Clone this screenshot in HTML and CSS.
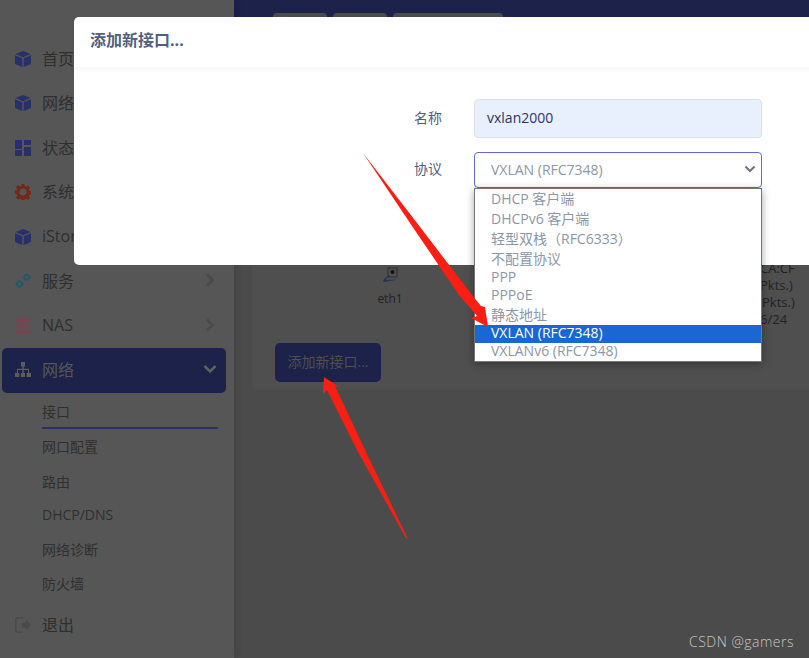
FILE: index.html
```html
<!DOCTYPE html>
<html lang="zh-CN">
<head>
<meta charset="utf-8">
<title>添加新接口</title>
<link rel="stylesheet" href="styles.css">
</head>
<body>
<div class="app">
  <aside class="sidebar">
    <nav class="nav">
      <a class="item"><svg class="ico c-navy" viewBox="0 0 16 16"><use href="#cube"/></svg>首页</a>
      <a class="item"><svg class="ico c-navy" viewBox="0 0 16 16"><use href="#cube"/></svg>网络</a>
      <a class="item"><svg class="ico c-navy" viewBox="0 0 16 16"><path d="M0 0h7v9H0zM0 10h7v6H0zM9 0h7v5H9zM9 7h7v9H9z"/></svg>状态</a>
      <a class="item"><svg class="ico c-rust" viewBox="0 0 16 16"><path fill-rule="evenodd" d="M6.500 0h3l.4 2.200 1.300.6L13 1.500l2.200 2.200-1.300 1.900.5 1.300 1.600.4v3l-1.600.4-.5 1.300 1.300 1.900-2.200 2.200-1.800-1.300-1.300.5-.4 1.800h-3l-.4-1.800-1.300-.5L3 15.500.8 13.300l1.300-1.900-.5-1.300L0 9.700v-3l1.600-.4.5-1.300L.8 3.200 3 1l2 1.300 1.200-.4zM8 4.500a3.500 3.500 0 1 0 0 7 3.500 3.500 0 0 0 0-7z"/></svg>系统</a>
      <a class="item"><svg class="ico c-navy" viewBox="0 0 16 16"><use href="#cube"/></svg>iStore</a>
      <a class="item"><svg class="ico c-teal" viewBox="0 0 16 16"><g fill="none" stroke="currentColor" stroke-width="2.200"><circle cx="4.500" cy="11" r="2.700" stroke-dasharray="1.800 .6"/><circle cx="11.800" cy="4.200" r="2.500" stroke-dasharray="1.600 .6"/></g></svg>服务<svg class="chev" viewBox="0 0 10 14"><path d="M2 1.500 7.500 7 2 12.500"/></svg></a>
      <a class="item"><svg class="ico c-rose" viewBox="0 0 16 16"><path d="M.5 2.200C.5 1 3.800 0 8 0s7.500 1 7.500 2.200S12.200 4.400 8 4.400.5 3.400.5 2.200zM.5 5.200C2.500 6.300 5 6.600 8 6.600s5.500-.3 7.500-1.400v2.600C15.500 9 12.200 10 8 10S.5 9 .5 7.800zM.5 10.800C2.500 11.900 5 12.200 8 12.200s5.500-.3 7.500-1.400v2.800C15.500 15 12.200 16 8 16S.5 15 .5 13.600z"/></svg>NAS<svg class="chev" viewBox="0 0 10 14"><path d="M2 1.500 7.500 7 2 12.500"/></svg></a>
      <a class="item active"><svg class="ico c-grey" viewBox="0 0 16 16"><path d="M6 0h4v4.500H8.700v2.300H14V11h2v4h-4.300v-4H13V8H8.700v3H10v4H6v-4h1.300V8H3v3h1.300v4H0v-4h2V6.800h5.300V4.500H6z"/></svg>网络<svg class="chev down" viewBox="0 0 14 10"><path d="M1.500 2 7 7.500 12.500 2"/></svg></a>
      <div class="sub">
        <a class="sub-item current">接口</a>
        <a class="sub-item">网口配置</a>
        <a class="sub-item">路由</a>
        <a class="sub-item">DHCP/DNS</a>
        <a class="sub-item">网络诊断</a>
        <a class="sub-item">防火墙</a>
      </div>
      <a class="item logout"><svg class="ico c-dim" viewBox="0 0 16 16"><path d="M0 2a2 2 0 0 1 2-2h6v1.500H2a.5.500 0 0 0-.5.500v12a.5.500 0 0 0 .5.500h6V16H2a2 2 0 0 1-2-2z"/><path d="M7 5.500h4V2.800L16 8l-5 5.200v-2.700H7z"/></svg>退出</a>
    </nav>
  </aside>
  <main class="main">
    <header class="topbar">
      <span class="tab tab-s"></span><span class="tab tab-s"></span><span class="tab tab-l"></span>
    </header>
    <section class="card">
      <div class="iface">
        <div class="device">
          <svg class="eth" viewBox="0 0 16 16"><rect x="6" y="1" width="9" height="9" fill="none" stroke="#2e2e2e"/><circle cx="10.500" cy="5" r="2" fill="#14140a"/><path d="M7 8 3 11l-2 3 1 1 12-2-1-.5-9 .5 1-2 3-2z" fill="#27344f"/></svg>
          <span>eth1</span>
        </div>
        <div class="stats">
          <span>CA:CF</span>
          <span>Pkts.)</span>
          <span class="shift">Pkts.)</span>
          <span>6/24</span>
        </div>
      </div>
      <button class="add-btn">添加新接口...</button>
    </section>
  </main>
</div>

<div class="modal">
  <h3 class="modal-title">添加新接口...</h3>
  <div class="modal-body">
    <div class="field">
      <label class="field-label">名称</label>
      <div class="input">vxlan2000</div>
    </div>
    <div class="field field-select">
      <label class="field-label">协议</label>
      <div class="select">VXLAN (RFC7348)<svg class="sel-chev" viewBox="0 0 12 8"><path d="M1.500 1.500 6 6l4.500-4.500"/></svg></div>
    </div>
  </div>
</div>

<ul class="dropdown">
  <li class="opt tall">DHCP 客户端</li>
  <li class="opt tall">DHCPv6 客户端</li>
  <li class="opt tall">轻型双栈（RFC6333）</li>
  <li class="opt tall">不配置协议</li>
  <li class="opt">PPP</li>
  <li class="opt">PPPoE</li>
  <li class="opt tall">静态地址</li>
  <li class="opt sel">VXLAN (RFC7348)</li>
  <li class="opt">VXLANv6 (RFC7348)</li>
</ul>

<svg class="arrows" viewBox="0 0 809 658">
  <path d="M363 153 417 223 472 295 481 306 485 307 488 327 471 318 477 316 459 295 412 226z"/>
  <path d="M324 377 339 387 335 386 365 450 408 539 406 538 357 450 327 390 323 394z"/>
</svg>

<div class="watermark">CSDN @gamers</div>

<svg class="defs" width="0" height="0">
  <defs>
    <g id="cube"><path d="M8 0 15.500 3 8 6.200.5 3zM0 4.200 7.300 7.300V16L0 13zM16 4.200 8.700 7.300V16l7.300-3z"/></g>
  </defs>
</svg>
</body>
</html>
```
FILE: styles.css
```css
* { box-sizing: border-box; }
html, body { margin: 0; height: 100%; }
body {
  width: 809px;
  height: 658px;
  overflow: hidden;
  position: relative;
  background: #4b4b4b;
  font-family: "Open Sans", "Noto Sans CJK SC", sans-serif;
  color: #2e2e2e;
}
.app { display: flex; height: 658px; }
.sidebar {
  width: 234px;
  flex: none;
  background: #565656;
  box-shadow: 2px 0 6px rgba(0,0,0,.12);
  padding: 36.600px 8px 0 2px;
  z-index: 1;
}
.nav { display: flex; flex-direction: column; }
.item {
  display: flex;
  align-items: center;
  height: 44.500px;
  padding: 0 8px 2px 13px;
  font-size: 16px;
  color: #2f2f2f;
}
.ico { width: 16px; height: 16px; margin: 2px 11px 0 0; fill: currentColor; flex: none; }
.c-navy { color: #28306a; }
.c-rust { color: #73291a; }
.c-teal { color: #0f5d6e; }
.c-rose { color: #7a4350; }
.c-grey { color: #5d5d5d; }
.c-dim { color: #4a4a4a; }
.chev { width: 10px; height: 14px; margin-left: auto; margin-right: 3px; fill: none; stroke: #4a4a4a; stroke-width: 2.500; }
.chev.down { width: 14px; height: 10px; margin-right: 1px; stroke: #5f5f5f; }
.active {
  background: #1c2249;
  border-radius: 5px;
  color: #565656;
}
.sub { display: flex; flex-direction: column; padding-left: 40px; margin-top: 2px; }
.sub-item {
  height: 34.300px;
  display: flex;
  align-items: center;
  font-size: 14px;
  color: #303030;
  width: 176px;
}
.sub-item.current { height: 34.500px; border-bottom: 2px solid #28306a; }
.logout { margin-top: 2px; }

.main { flex: 1; min-width: 0; display: flex; flex-direction: column; }
.topbar {
  display: flex;
  gap: 6px;
  height: 40px;
  background: #1c2249;
  padding: 13px 0 0 39px;
}
.tab { height: 20px; background: #4b4b4b; border-radius: 4px; }
.tab-s { width: 54px; }
.tab-l { width: 110px; }
.card {
  margin: 0 0 0 18px;
  height: 350px;
  background: #4f4f4f;
  border-radius: 0 0 0 6px;
  padding: 227px 0 0 23px;
  display: flex;
  flex-direction: column;
  align-items: flex-start;
}
.iface { display: flex; width: 100%; height: 76px; }
.device {
  margin-left: 88px;
  width: 54px;
  display: flex;
  flex-direction: column;
  align-items: center;
  gap: 7px;
  font-size: 12px;
  color: #222;
}
.eth { width: 16px; height: 16px; }
.stats {
  margin-left: auto;
  margin-top: -7px;
  width: 49px;
  display: flex;
  flex-direction: column;
  font-size: 13px;
  line-height: 17px;
  color: #222;
  white-space: nowrap;
}
.shift { margin-left: 2px; }
.add-btn {
  width: 106px;
  height: 39px;
  border: 0;
  border-radius: 5px;
  background: #1c2249;
  color: #4f4f4f;
  font: inherit;
  font-size: 14px;
  padding: 0 0 3px;
}

.modal {
  position: absolute;
  left: 74px;
  top: 17px;
  width: 760px;
  height: 248px;
  background: #fff;
  border-radius: 5px;
  z-index: 2;
}
.modal-title {
  margin: 0;
  height: 50px;
  padding: 0 16px 7px;
  display: flex;
  align-items: center;
  font-size: 16px;
  font-weight: 700;
  color: #525f7f;
  box-shadow: 0 3px 5px rgba(0,0,0,.03);
}
.modal-body { padding: 32px 0 0; }
.field { display: flex; align-items: center; gap: 0; padding-left: 340px; height: 39px; }
.field-select { margin-top: 14px; height: 36px; }
.field-label { width: 60px; font-size: 14px; color: #525f7f; margin-top: -4px; }
.input {
  width: 288px;
  height: 39px;
  padding: 0 12px 2px;
  display: flex;
  align-items: center;
  background: #e8f0fe;
  border: 1px solid #dee2e6;
  border-radius: 4px;
  font-size: 14px;
  color: #32325d;
}
.select {
  width: 288px;
  height: 36px;
  padding: 0 16px 2px;
  display: flex;
  align-items: center;
  justify-content: space-between;
  border: 1px solid #5e6ad2;
  border-radius: 4px;
  font-size: 14px;
  color: #8c98a9;
}
.sel-chev { width: 12px; height: 8px; margin-right: -11px; fill: none; stroke: #6b7480; stroke-width: 2; }

.dropdown {
  position: absolute;
  left: 474px;
  top: 188px;
  width: 288px;
  margin: 0;
  padding: 0;
  list-style: none;
  background: #fff;
  border: 1px solid #767676;
  box-shadow: 0 2px 8px rgba(0,0,0,.35);
  z-index: 3;
}
.opt {
  height: 18px;
  padding: 0 16px 3px;
  display: flex;
  align-items: center;
  font-size: 14px;
  color: #8c98a9;
  white-space: nowrap;
}
.opt.tall { height: 20px; padding-bottom: 2px; }
.opt.sel { background: #1967d2; color: #fff; }

.arrows { position: absolute; left: 0; top: 0; width: 809px; height: 658px; z-index: 4; }
.arrows path { fill: #fb1e12; }
.watermark {
  position: absolute;
  right: 15px;
  top: 632px;
  font-family: "Open Sans", sans-serif;
  font-size: 14px;
  font-weight: 300;
  line-height: 20px;
  color: #c8c8c8;
  letter-spacing: .5px;
  white-space: pre;
  z-index: 4;
}
.defs { position: absolute; }
```
